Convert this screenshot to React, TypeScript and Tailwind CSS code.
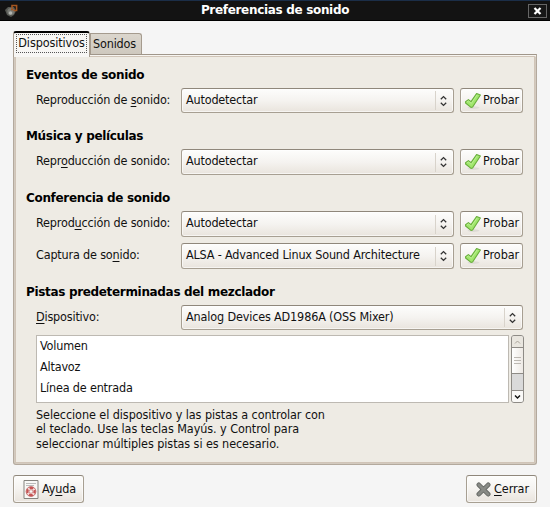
import type { ReactNode } from "react";

const face = "rounded-[3px] border border-[#a79f92] border-t-[#8f877b] bg-linear-to-b from-[#fdfdfc] via-[#f5f3f0] to-[#e9e4dd] shadow-[inset_0_0_0_1px_rgba(255,255,255,0.6)]";

function Check() {
  return (
    <svg width="18" height="18" viewBox="0 0 18 18" className="shrink-0">
      <ellipse cx="9.5" cy="15.6" rx="6" ry="1.3" fill="#dedbd5" />
      <path d="M1.6 9.6 4.4 7.6 7 9.6 12.6 1.5 16.4 3 8.6 15 7 15.4 1.6 11z" fill="#a0e66c" stroke="#68ad3c" strokeWidth="1.1" strokeLinejoin="round" />
      <path d="M3 10 4.4 9 7.3 11.4 13.2 2.9" fill="none" stroke="#c3f29c" strokeWidth="0.8" />
    </svg>
  );
}

function Combo({ children, width, height }: { children: ReactNode; width: string; height: string }) {
  return (
    <div className={`flex items-center ${height} ${width} ${face}`}>
      <span className="flex-1 pb-[2px] pl-1">{children}</span>
      <span className="h-[19px] w-px bg-[#d8d3cb]" />
      <svg width="17" height="14" viewBox="0 0 17 14" fill="none" stroke="#333" strokeWidth="1.3">
        <path d="M4.8 5.2 7.5 2.6 10.2 5.2M4.8 8.8 7.5 11.4 10.2 8.8" />
      </svg>
    </div>
  );
}

function Row({ label, value, height = "h-[26px]" }: { label: ReactNode; value: string; height?: string }) {
  return (
    <div className={`flex items-center ${height}`}>
      <span className="w-[145px] pb-[2px]">{label}</span>
      <Combo width="w-[273px]" height={height}>{value}</Combo>
      <button className={`ml-[6px] flex w-[63px] items-center pl-[3px] ${height} ${face}`}>
        <Check />
        <span className="ml-px pb-[2px] tracking-[-0.05px]">Probar</span>
      </button>
    </div>
  );
}

function Heading({ children }: { children: ReactNode }) {
  return <h2 className="-ml-[10px] h-4 text-[12px] leading-4 font-bold tracking-[-0.33px] text-black [font-family:'DejaVu_Sans',sans-serif]">{children}</h2>;
}

const U = ({ children }: { children: ReactNode }) => <span className="underline decoration-1 underline-offset-2">{children}</span>;

export default function App() {
  return (
    <div className="flex h-[507px] w-[550px] flex-col overflow-hidden bg-[#f5f5f5] text-[12.5px] leading-4 tracking-[-0.18px] whitespace-nowrap text-[#111] [font-family:'DejaVu_Sans_Condensed','DejaVu_Sans',sans-serif]">
      <header className="flex h-[21px] shrink-0 items-center border-t border-b border-t-[#1b2e48] border-b-black bg-[#131313] pr-[3px] pl-[4px] text-white">
        <svg width="15" height="15" viewBox="0 0 15 15">
          <path d="M1 7 4 4 10 4 12 8 10 12 7 14 3 12z" fill="#555752" />
          <circle cx="7" cy="8.5" r="3.6" fill="#777974" />
          <circle cx="6.5" cy="10" r="1.8" fill="#b2b4af" />
          <path d="M8 5.5V2.5H12.6V7.5H9.5" fill="none" stroke="#a4551f" strokeWidth="1.6" />
          <path d="M7 6.5h2.4" stroke="#a4551f" strokeWidth="1.6" />
        </svg>
        <h1 className="flex-1 pb-px pl-[3px] text-center text-[12px] font-bold tracking-[-0.32px] [font-family:'DejaVu_Sans',sans-serif]">Preferencias de sonido</h1>
        <button className="flex h-[14px] w-[19px] items-center justify-center border border-[#666] bg-[#171717]">
          <svg width="9" height="8" viewBox="0 0 9 8" stroke="white" strokeWidth="2.2"><path d="m1.5 1 6 6m0-6-6 6" /></svg>
        </button>
      </header>

      <div className="mt-[10px] ml-[13px] flex h-[23px] shrink-0 items-end">
        <div className="z-10 -mb-[3px] h-[26px] w-[77px] rounded-t-[3px] border-x border-t-2 border-x-[#a99e91] border-t-black bg-[#f7f6f4] px-[2px] pt-px">
          <div className="flex h-[19px] items-center justify-center border border-dotted border-[#555] pb-[2px] tracking-[-0.1px]">Dispositivos</div>
        </div>
        <div className="flex h-[21px] w-[52px] items-center justify-center rounded-tr-[3px] border border-b-0 border-[#a59b8e] bg-linear-to-b from-[#dbd6cd] to-[#cec8be] pr-[3px]">Sonidos</div>
      </div>

      <main className="ml-[13px] h-[411px] w-[524px] shrink-0 rounded-b-[3px] border border-[#b3a99d] border-t-[#a0968a] bg-[#d3cabf] bg-linear-to-b from-[#f7f5f1] from-[1px] to-[#d3cabf] to-[2px] p-px">
        <div className="h-full border border-[#d0c4b7] bg-[#eeebe4] pt-[10px] pl-[20px]">
          <Heading>Eventos de sonido</Heading>
          <div className="mt-[5px]"><Row height="h-[25px]" label={<>Reproducción de <U>s</U>onido:</>} value="Autodetectar" /></div>
          <div className="mt-[15px]"><Heading>Música y películas</Heading></div>
          <div className="mt-[5px]"><Row label={<>Repr<U>o</U>ducción de sonido:</>} value="Autodetectar" /></div>
          <div className="mt-[15px]"><Heading>Conferencia de sonido</Heading></div>
          <div className="mt-[5px] flex flex-col gap-[6px]">
            <Row label={<>Reprod<U>u</U>cción de sonido:</>} value="Autodetectar" />
            <Row label={<>Captura de so<U>n</U>ido:</>} value="ALSA - Advanced Linux Sound Architecture" />
          </div>
          <div className="mt-[15px]"><Heading>Pistas predeterminadas del mezclador</Heading></div>
          <div className="mt-[5px] flex h-[25px] items-center">
            <span className="w-[145px] pb-[2px]"><U>D</U>ispositivo:</span>
            <Combo width="w-[342px]" height="h-[25px]"><span className="tracking-[-0.15px]">Analog Devices AD1986A (OSS Mixer)</span></Combo>
          </div>
          <div className="mt-[5px] flex h-[68px]">
            <ul className="w-[473px] border border-[#bdb9b2] bg-white pl-[3px]">
              <li className="h-[20px] leading-[20px]">Volumen</li>
              <li className="h-[21px] leading-[21px]">Altavoz</li>
              <li className="h-[21px] leading-[21px]">Línea de entrada</li>
            </ul>
            <div className="ml-[2px] flex w-[13px] flex-col overflow-hidden rounded-[3px] border border-[#8e8b86] bg-[#dadada]">
              <div className="flex h-[12px] items-center justify-center border-b border-[#8e8b86] bg-[#e9e6df]"><svg width="7" height="4" fill="none" stroke="#aaa49a"><path d="m1 3.5 2.5-2.5L6 3.5" /></svg></div>
              <div className="flex h-[26px] flex-col items-center justify-center gap-[2px] border-b border-[#8e8b86] bg-linear-to-r from-white to-[#eeeae5]">
                <span className="h-px w-[7px] bg-[#bcb8b2]" /><span className="h-px w-[7px] bg-[#bcb8b2]" /><span className="h-px w-[7px] bg-[#bcb8b2]" />
              </div>
              <div className="mt-auto flex h-[12px] items-center justify-center border-t border-[#8e8b86] bg-[#faf9f7]"><svg width="7" height="4" fill="none" stroke="#111" strokeWidth="1.4"><path d="m1 .5 2.5 2.5L6 .5" /></svg></div>
            </div>
          </div>
          <p className="mt-[5px] leading-[14.4px] tracking-[-0.07px]">Seleccione el dispositivo y las pistas a controlar con<br />el teclado. Use las teclas Mayús. y Control para<br />seleccionar múltiples pistas si es necesario.</p>
        </div>
      </main>

      <footer className="mx-[13px] mt-[10px] flex h-[28px] shrink-0 justify-between">
        <button className={`flex w-[71px] items-center pl-[9px] ${face}`}>
          <svg width="16" height="19" viewBox="0 0 16 19">
            <path d="M1 .5h14v18H1z" fill="#f8f8f6" stroke="#85837e" />
            <path d="M3 3.5h10M3 5.5h8" stroke="#bbb" />
            <circle cx="8" cy="11.5" r="3.6" fill="none" stroke="#f3dcda" strokeWidth="3.2" />
            <circle cx="8" cy="11.5" r="3.6" fill="none" stroke="#c65353" strokeWidth="2.2" strokeDasharray="3.8 1.85" strokeDashoffset="1.9" />
            <circle cx="8" cy="11.5" r="4.9" fill="none" stroke="#bd5a5a" strokeWidth=".8" />
            <circle cx="8" cy="11.5" r="1.8" fill="#f8f8f6" stroke="#bd5a5a" strokeWidth=".6" />
          </svg>
          <span className="ml-[3px] tracking-[-0.1px]">Ay<U>u</U>da</span>
        </button>
        <button className={`flex w-[71px] items-center pl-[9px] ${face}`}>
          <svg width="15" height="15" viewBox="0 0 15 15" strokeLinecap="round"><path d="m2.8 2.8 9.4 9.4m0-9.4-9.4 9.4" stroke="#666864" strokeWidth="4.6" /><path d="m2.8 2.8 9.4 9.4m0-9.4-9.4 9.4" stroke="#888a85" strokeWidth="2.8" /></svg>
          <span className="ml-[3px] tracking-[-0.05px]"><U>C</U>errar</span>
        </button>
      </footer>
    </div>
  );
}
